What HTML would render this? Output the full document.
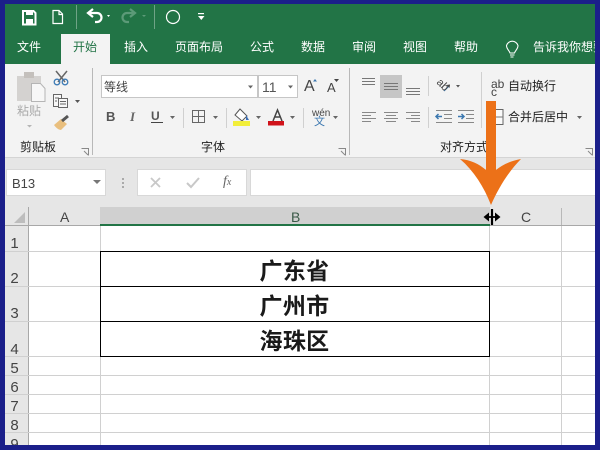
<!DOCTYPE html>
<html><head><meta charset="utf-8">
<style>
html,body{margin:0;padding:0}
body{width:600px;height:450px;overflow:hidden;background:#1b1f8a;position:relative;font-family:"Liberation Sans","Noto Sans CJK SC",sans-serif}
.a{position:absolute}
.t{position:absolute;white-space:nowrap;line-height:1;color:#333}
.tab{position:absolute;white-space:nowrap;line-height:1;color:#fff;font-size:12px;top:41px}
.lb{position:absolute;white-space:nowrap;line-height:1;color:#222;font-size:12px;top:141px}
.rn{position:absolute;left:5px;width:19px;text-align:center;font-size:15px;line-height:1;color:#444}
.hl{position:absolute;left:5px;width:590px;height:1px;background:#d0d0d0}
.bl{position:absolute;left:100px;width:390px;height:1px;background:#000}
.big{position:absolute;left:100px;width:389px;text-align:center;font-size:23px;letter-spacing:.3px;font-weight:bold;line-height:1;color:#1a1a1a;font-family:"Noto Sans CJK SC",sans-serif}
</style></head><body>
<div class="a" style="left:5px;top:4px;width:590px;height:441px;background:#fff"></div>
<div class="a" style="left:5px;top:4px;width:590px;height:60px;background:#227446"></div>
<div class="a" style="left:61px;top:34px;width:49px;height:30px;background:#f3f3f3"></div>
<div class="a" style="left:5px;top:64px;width:590px;height:93px;background:#f3f3f3"></div>
<div class="a" style="left:5px;top:157px;width:590px;height:50px;background:#e6e6e6;border-top:1px solid #d4d4d4;box-sizing:border-box"></div>

<svg class="a" style="left:0;top:0" width="600" height="165" viewBox="0 0 600 165" fill="none">
<!-- QAT -->
<path d="M23 11h10.500l2 2v11.500h-12.500z" stroke="#fff" stroke-width="2"/><rect x="26" y="11" width="7" height="4" fill="#fff"/><rect x="26" y="19" width="7" height="5" fill="#fff"/>
<path d="M53 10.500h6l3.500 3.500v9.500h-9.500z M59 10.500v4h3.500" stroke="#fff" stroke-width="1.200"/>
<rect x="76" y="5" width="1" height="24" fill="#6fa386"/>
<path d="M90 13h7a4 4 0 0 1 0 9h-2" stroke="#fff" stroke-width="2.200"/><path d="M93 9l-5 4 5 4" stroke="#fff" stroke-width="2.200"/>
<path d="M107 15l3 0-1.500 2z" fill="#fff"/>
<path d="M133 13h-6a4 4 0 0 0 0 9h2" stroke="#5c9a78" stroke-width="2.200"/><path d="M130 9l5 4-5 4" stroke="#5c9a78" stroke-width="2.200"/>
<path d="M142 15l4 0-2 2z" fill="#5c9a78"/>
<rect x="154" y="5" width="1" height="24" fill="#6fa386"/>
<circle cx="173" cy="17" r="6.500" stroke="#fff" stroke-width="1.200"/>
<rect x="198" y="13" width="6" height="1.200" fill="#fff"/><path d="M198 16h6.500l-3.200 4z" fill="#fff"/>
<!-- bulb -->
<path d="M510 53c-1-3-3.500-4-3.500-7.500a6 6 0 0 1 11.500 0c0 3.500-2.500 4.500-3.500 7.500z M510 55h4.500M510.500 57h3" stroke="#fff" stroke-width="1.100"/>
<!-- clipboard -->
<rect x="17" y="76" width="24" height="25" fill="#d4d2d0"/><rect x="24" y="72" width="10" height="6" fill="#c4c0bc"/>
<path d="M31.500 83.500h9l4.500 5v13h-13.500z" fill="#f7f7f7" stroke="#b5b5b5"/>
<!-- scissors -->
<path d="M56 71l9 11M67 71l-9 11" stroke="#666" stroke-width="1.500"/><circle cx="57" cy="82" r="2.800" stroke="#3f7cb5" stroke-width="1.300"/><circle cx="65" cy="82" r="2.800" stroke="#3f7cb5" stroke-width="1.300"/>
<!-- copy -->
<path d="M53.500 94.500h8v12h-8z" stroke="#666" fill="#f8f8f8"/><path d="M58.500 98.500h9v9h-9z" stroke="#666" fill="#f8f8f8"/><path d="M60 101.500h6M60 104h6M55 98h4M55 101h2" stroke="#666"/>
<path d="M75 100h5l-2.500 3z" fill="#555"/>
<!-- brush -->
<path d="M54 125l7-6 6 5-6 6c-2 0-5-2-7-5z" fill="#e9bf7e"/><path d="M62 121l6-5" stroke="#555" stroke-width="3"/>
<path d="M27 125h5l-2.500 2.500z" fill="#b5b5b5"/>
<!-- separators -->
<rect x="92" y="68" width="1" height="87" fill="#b8b8b8"/><rect x="349" y="68" width="1" height="87" fill="#b8b8b8"/>
<rect x="183" y="108" width="1" height="20" fill="#d0d0d0"/><rect x="226" y="108" width="1" height="20" fill="#d0d0d0"/><rect x="303" y="108" width="1" height="20" fill="#d0d0d0"/>
<rect x="428" y="76" width="1" height="20" fill="#d0d0d0"/><rect x="428" y="107" width="1" height="21" fill="#d0d0d0"/><rect x="481" y="72" width="1" height="56" fill="#d0d0d0"/>
<!-- combo boxes -->
<rect x="101.500" y="75.500" width="156" height="22" fill="#fff" stroke="#c6c6c6"/>
<rect x="258.500" y="75.500" width="39" height="22" fill="#fff" stroke="#c6c6c6"/>
<path d="M248 85.500h5l-2.500 3z M288 85.500h5l-2.500 3z" fill="#666"/>
<!-- font grow/shrink -->
<path d="M313 81.500l2-2.500 2 2.500z" fill="#3c78b0"/><path d="M334 79h5l-2.500 3z" fill="#444"/>
<!-- B I U arrows -->
<path d="M170 116h5l-2.500 3z M213 116h5l-2.500 3z M256 116h5l-2.500 3z M290 116h5l-2.500 3z M333 116h5l-2.500 3z" fill="#666"/>
<rect x="151" y="122" width="12" height="1" fill="#444"/>
<!-- borders -->
<rect x="192.500" y="110.500" width="12" height="12" stroke="#666"/><path d="M198.500 110v13M192 116.500h13" stroke="#666"/>
<!-- fill colour -->
<path d="M240 109l7 7-5 5-7-6z" fill="#fff" stroke="#555"/><path d="M246 115l3 5-3 0z" fill="#3c6fb5"/><rect x="233" y="121" width="17" height="5" fill="#f2ee3a"/>
<!-- font colour -->
<path d="M273 121l4.500-11 4.500 11M275 117h5" stroke="#444" stroke-width="1.500"/><rect x="268" y="121" width="16" height="4.500" fill="#d0121a"/>
<!-- alignment top row -->
<path d="M362 78.500h13M362 81.500h13M362 84.500h13" stroke="#777"/>
<rect x="380" y="75" width="22" height="23" fill="#c6c6c6"/>
<path d="M384 83.500h14M384 86.500h14M384 89.500h14" stroke="#777"/>
<path d="M406 88.500h14M406 91.500h14M406 94.500h14" stroke="#777"/>
<path d="M444 91l5.500-5.500" stroke="#3c78b0" stroke-width="1.200"/><path d="M450 84.500l-3.500 .5 3 3z" fill="#444"/><path d="M456 85h4l-2 2.500z" fill="#555"/>
<!-- alignment bottom row -->
<path d="M362 112.500h14M362 115.500h9M362 118.500h14M362 121.500h9" stroke="#888"/>
<path d="M384 112.500h14M386 115.500h10M384 118.500h14M386 121.500h10" stroke="#888"/>
<path d="M406 112.500h14M411 115.500h9M406 118.500h14M411 121.500h9" stroke="#888"/>
<path d="M436 110.500h16M444 114.500h8M444 118.500h8M436 122.500h16" stroke="#888"/><path d="M442 116.500h-6m2.500-2.500l-2.500 2.500 2.500 2.500" stroke="#3c78b0" stroke-width="1.500"/>
<path d="M458 110.500h16M466 114.500h8M466 118.500h8M458 122.500h16" stroke="#888"/><path d="M458 116.500h6m-2.500-2.500l2.500 2.500-2.500 2.500" stroke="#3c78b0" stroke-width="1.500"/>
<!-- merge icon -->
<rect x="489.500" y="109.500" width="13.500" height="15" fill="#fafafa" stroke="#666"/><path d="M490 117h13" stroke="#777"/>
<path d="M577 116h5l-2.500 3z" fill="#666"/>
<!-- dialog launchers -->
<path d="M81.500 148.500h7v7M84 151l4 4" stroke="#888"/><path d="M338.500 148.500h7v7M341 151l4 4" stroke="#888"/><path d="M585.500 148.500h7v7M588 151l4 4" stroke="#888"/>
</svg>

<div class="tab" style="left:17px">文件</div>
<div class="tab" style="left:73px;color:#227446">开始</div>
<div class="tab" style="left:124px">插入</div>
<div class="tab" style="left:175px">页面布局</div>
<div class="tab" style="left:250px">公式</div>
<div class="tab" style="left:301px">数据</div>
<div class="tab" style="left:352px">审阅</div>
<div class="tab" style="left:403px">视图</div>
<div class="tab" style="left:454px">帮助</div>
<div class="tab" style="left:533px;width:62px;overflow:hidden">告诉我你想要</div>

<div class="t" style="left:17px;top:105px;font-size:12px;color:#aaa">粘贴</div>
<div class="t" style="left:104px;top:81px;font-size:12px;color:#444">等线</div>
<div class="t" style="left:262px;top:80px;font-size:14px;color:#555">11</div>
<div class="t" style="left:304px;top:79px;font-size:16px;color:#444">A</div>
<div class="t" style="left:327px;top:81px;font-size:13px;color:#444">A</div>
<div class="t" style="left:106px;top:110px;font-size:13px;font-weight:bold;color:#555">B</div>
<div class="t" style="left:130px;top:110px;font-size:13px;font-style:italic;font-family:'Liberation Serif',serif;font-weight:bold;color:#666">I</div>
<div class="t" style="left:151px;top:110px;font-size:12px;font-weight:bold;color:#555">U</div>
<div class="t" style="left:312px;top:109px;font-size:10px;color:#444">wén</div>
<div class="t" style="left:314px;top:117px;font-size:11px;color:#3c78b0">文</div>
<div class="t" style="left:436px;top:80px;font-size:11px;color:#444;transform:rotate(45deg)">ab</div>
<div class="t" style="left:491px;top:78px;font-size:12px;color:#444">ab</div>
<div class="t" style="left:491px;top:86px;font-size:12px;color:#444">c</div>
<div class="t" style="left:508px;top:80px;font-size:12px;color:#222">自动换行</div>
<div class="t" style="left:508px;top:111px;font-size:12px;color:#222">合并后居中</div>

<div class="lb" style="left:20px">剪贴板</div>
<div class="lb" style="left:201px">字体</div>
<div class="lb" style="left:440px">对齐方式</div>

<!-- formula bar -->
<div class="a" style="left:6px;top:169px;width:100px;height:27px;background:#fff;border:1px solid #d8d8d8;box-sizing:border-box"></div>
<div class="t" style="left:12px;top:177px;font-size:13px;color:#444">B13</div>
<div class="a" style="left:93px;top:180px;width:0;height:0;border-left:4px solid transparent;border-right:4px solid transparent;border-top:4px solid #777"></div>
<div class="a" style="left:122px;top:178px;width:2px;height:2px;background:#aaa;box-shadow:0 4px 0 #aaa,0 8px 0 #aaa"></div>
<div class="a" style="left:137px;top:169px;width:110px;height:27px;background:#fff;border:1px solid #d8d8d8;box-sizing:border-box"></div>
<div class="a" style="left:250px;top:169px;width:345px;height:27px;background:#fff;border:1px solid #d8d8d8;border-right:0;box-sizing:border-box"></div>
<svg class="a" style="left:137px;top:169px" width="110" height="27" fill="none">
<path d="M14 9l9 9M23 9l-9 9" stroke="#c8c8c8" stroke-width="1.800"/>
<path d="M50 14l4 4 8-9" stroke="#c8c8c8" stroke-width="2"/>
</svg>
<div class="t" style="left:223px;top:175px;font-size:14px;font-style:italic;font-family:'Liberation Serif',serif;color:#666">f<span style="font-size:10px">x</span></div>

<!-- headers -->
<div class="a" style="left:5px;top:207px;width:590px;height:19px;background:#e6e6e6"></div>
<div class="a" style="left:5px;top:226px;width:24px;height:219px;background:#e6e6e6"></div>
<div class="a" style="left:100px;top:207px;width:390px;height:17px;background:#d0d0d0"></div>
<div class="a" style="left:100px;top:224px;width:390px;height:2px;background:#227446"></div>
<div class="a" style="left:28px;top:207px;width:1px;height:238px;background:#a8a8a8"></div>
<div class="a" style="left:5px;top:225px;width:95px;height:1px;background:#a8a8a8"></div>
<div class="a" style="left:490px;top:225px;width:105px;height:1px;background:#a8a8a8"></div>
<div class="a" style="left:561px;top:208px;width:1px;height:17px;background:#b8b8b8"></div>
<div class="a" style="left:14px;top:212px;width:0;height:0;border-left:11px solid transparent;border-bottom:11px solid #bdbdbd"></div>
<div class="t" style="left:60px;top:210px;font-size:14px;color:#444">A</div>
<div class="t" style="left:291px;top:210px;font-size:14px;color:#3b5a48">B</div>
<div class="t" style="left:521px;top:210px;font-size:14px;color:#444">C</div>

<!-- grid -->
<div class="hl" style="top:251px"></div>
<div class="hl" style="top:286px"></div>
<div class="hl" style="top:321px"></div>
<div class="hl" style="top:356px"></div>
<div class="hl" style="top:375px"></div>
<div class="hl" style="top:394px"></div>
<div class="hl" style="top:413px"></div>
<div class="hl" style="top:432px"></div>
<div class="a" style="left:100px;top:226px;width:1px;height:219px;background:#d0d0d0"></div>
<div class="a" style="left:489px;top:226px;width:1px;height:219px;background:#d0d0d0"></div>
<div class="a" style="left:561px;top:226px;width:1px;height:219px;background:#d0d0d0"></div>

<div class="rn" style="top:236px">1</div>
<div class="rn" style="top:271px">2</div>
<div class="rn" style="top:306px">3</div>
<div class="rn" style="top:342px">4</div>
<div class="rn" style="top:361px">5</div>
<div class="rn" style="top:380px">6</div>
<div class="rn" style="top:399px">7</div>
<div class="rn" style="top:418px">8</div>
<div class="a" style="left:5px;top:433px;width:24px;height:12px;overflow:hidden"><div class="rn" style="left:0;top:4px">9</div></div>

<!-- table -->
<div class="bl" style="top:251px"></div>
<div class="bl" style="top:286px"></div>
<div class="bl" style="top:321px"></div>
<div class="bl" style="top:356px"></div>
<div class="a" style="left:100px;top:251px;width:1px;height:106px;background:#000"></div>
<div class="a" style="left:489px;top:251px;width:1px;height:106px;background:#000"></div>
<div class="big" style="top:258px">广东省</div>
<div class="big" style="top:293px">广州市</div>
<div class="big" style="top:328px">海珠区</div>

<!-- arrow and cursor -->
<svg class="a" style="left:0;top:0" width="600" height="450" fill="none">
<path d="M486 101h10v69c6-5 14-9 25-11-12 12-22 28-30 46-7-18-17-34-31-46 11 1 19 5 26 11z" fill="#ec7118"/>
<path d="M492 209v16" stroke="#000" stroke-width="2.200"/>
<path d="M486 217h13" stroke="#000" stroke-width="1.800"/>
<path d="M489 212.500l-5.500 4.500 5.500 4.500z M495 212.500l5.500 4.500-5.500 4.500z" fill="#000"/>
</svg>
</body></html>
